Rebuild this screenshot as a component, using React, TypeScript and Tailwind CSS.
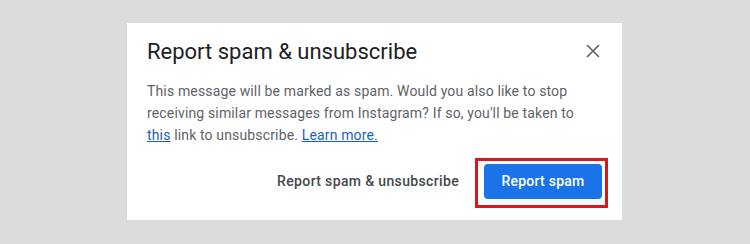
import React from 'react';

export default function App() {
  return (
    <div className="w-[750px] h-[244px] bg-[#dcdcdc] pt-[23px] pl-[127px] font-['Roboto',sans-serif]">
      <div className="w-[495px] h-[197px] bg-white pl-[20px] pr-[20px] pt-[15px]">
        <div className="flex items-start justify-between">
          <h2 className="text-[22px] leading-[28px] text-[#202124]">Report spam &amp; unsubscribe</h2>
          <button className="mt-[6px] mr-[2px] text-[#5f6368]" aria-label="Close">
            <svg width="14" height="14" viewBox="0 0 14 14" fill="none" stroke="currentColor" strokeWidth="1.6">
              <path d="M1 1l12 12M13 1L1 13" />
            </svg>
          </button>
        </div>
        <p className="mt-[14px] text-[14px] leading-[22px] tracking-[0.15px] text-[#5f6368] pr-[10px]">
          This message will be marked as spam. Would you also like to stop receiving similar messages from
          Instagram? If so, you'll be taken to{' '}
          <a className="text-[#1a5fb4] underline">this</a> link to unsubscribe.{' '}
          <a className="text-[#1a5fb4] underline">Learn more.</a>
        </p>
        <div className="mt-[18px] flex items-center justify-end gap-[25px]">
          <button className="text-[14px] tracking-[0.35px] text-[#45484c] font-medium">Report spam &amp; unsubscribe</button>
          <div className="relative">
            <button className="h-[35px] w-[118px] rounded-[4px] bg-[#1a73e8] text-white text-[14px] tracking-[0.25px] font-medium">
              Report spam
            </button>
            <div className="absolute left-[-9px] top-[-6px] w-[133px] h-[50px] border-[3px] border-[#d7191c]" />
          </div>
        </div>
      </div>
    </div>
  );
}
